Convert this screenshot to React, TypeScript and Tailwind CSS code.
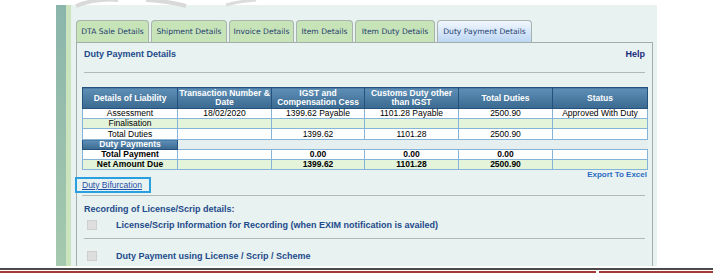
import React from "react";

const hdr = "bg-[linear-gradient(#5e8fb6,#3b6990)] text-white font-bold border border-[#24527e]";
const cell = "border border-[#86b3d8] text-center";

type Row = { c: string[]; bg: string; bold?: boolean; h: string };

const rows: Row[] = [
  { c: ["Assessment", "18/02/2020", "1399.62 Payable", "1101.28 Payable", "2500.90", "Approved With Duty"], bg: "bg-white", h: "h-[10px]" },
  { c: ["Finalisation", "", "", "", "", ""], bg: "bg-[#e3f4da]", h: "h-[10px]" },
  { c: ["Total Duties", "", "1399.62", "1101.28", "2500.90", ""], bg: "bg-white", h: "h-[11px]" },
];
const rows2: Row[] = [
  { c: ["Total Payment", "", "0.00", "0.00", "0.00", ""], bg: "bg-white", bold: true, h: "h-[10px]" },
  { c: ["Net Amount Due", "", "1399.62", "1101.28", "2500.90", ""], bg: "bg-[#e3f4da]", bold: true, h: "h-[10px]" },
];

const tabs = [
  { t: "DTA Sale Details", w: 73 },
  { t: "Shipment Details", w: 76 },
  { t: "Invoice Details", w: 65 },
  { t: "Item Details", w: 57 },
  { t: "Item Duty Details", w: 80 },
];

function Checkbox() {
  return <div className="w-[10px] h-[10px] bg-[#dedede] border border-[#cfcfcf] shrink-0" />;
}

export default function App() {
  return (
    <div className="relative w-[713px] h-[273px] bg-white overflow-hidden" style={{ fontFamily: '"Liberation Sans", Arial, sans-serif' }}>
      <svg className="absolute left-0 top-0" width="713" height="20" viewBox="0 0 713 20">
        <path d="M76 6 Q96 -2 118 0" stroke="#d9d9d9" strokeWidth="4" fill="none" />
        <path d="M146 0 Q168 1 186 6" stroke="#d9d9d9" strokeWidth="4" fill="none" />
        <path d="M226 5 Q240 1 256 0" stroke="#dcdcdc" strokeWidth="3" fill="none" />
      </svg>
      <div className="flex pl-[56px] pt-[5px]">
        <div className="w-[10px] h-[261px] bg-[linear-gradient(#8bb5ab,#a5c9ae)]" />
        <div className="w-[5px] h-[261px] bg-[#cbe4bd]" />
        <div className="w-[586px] h-[261px] bg-[#e8f2f0] pl-[5px] pt-[15px]">
          {/* tabs */}
          <div className="flex h-[22px] items-end" style={{ fontFamily: '"DejaVu Sans", Verdana, sans-serif' }}>
            {tabs.map((t, i) => (
              <div
                key={i}
                className="h-[22px] mr-[2px] rounded-t-[4px] border border-b-0 border-[#a9b3ad] bg-[#c7e3b8] text-[#1f3d6e] text-[7.6px] flex items-center justify-center"
                style={{ width: t.w }}
              >
                {t.t}
              </div>
            ))}
            <div className="h-[22px] w-[95px] rounded-t-[4px] border border-b-0 border-[#a9b3ad] bg-[linear-gradient(#f2f7ff,#bcd6f3)] text-[#1f3d6e] text-[7.6px] flex items-center justify-center">
              Duty Payment Details
            </div>
          </div>
          {/* content box */}
          <div className="w-[577px] h-[224px] border border-[#a3aeaa] border-b-0">
            <div className="px-[7px] pt-[5px] flex justify-between items-center h-[17px]">
              <span className="text-[9px] font-bold text-[#1e4a8c] leading-[12px]">Duty Payment Details</span>
              <span className="text-[9px] font-bold text-[#1a2a80] leading-[12px]">Help</span>
            </div>
            <div className="mx-[7px] mt-[12px] h-px bg-[#b3b8b8]" />
            <div className="px-[5px] mt-[14px]">
              <table className="border-collapse w-[565px] text-[8.5px] leading-[9px] text-black table-fixed">
                <colgroup>
                  <col style={{ width: 95 }} />
                  <col style={{ width: 94 }} />
                  <col style={{ width: 93 }} />
                  <col style={{ width: 94 }} />
                  <col style={{ width: 94 }} />
                  <col style={{ width: 95 }} />
                </colgroup>
                <thead>
                  <tr className="h-[21px]">
                    <th className={hdr}>Details of Liability</th>
                    <th className={hdr}>Transaction Number &amp; Date</th>
                    <th className={hdr}>IGST and Compensation Cess</th>
                    <th className={hdr}>Customs Duty other than IGST</th>
                    <th className={hdr}>Total Duties</th>
                    <th className={hdr}>Status</th>
                  </tr>
                </thead>
                <tbody>
                  {rows.map((r, i) => (
                    <tr key={i} className={r.h + " " + r.bg}>
                      {r.c.map((c, j) => (
                        <td key={j} className={cell + " p-0 " + r.h}>{c}</td>
                      ))}
                    </tr>
                  ))}
                  <tr className="h-[10px]">
                    <td className={hdr + " text-center p-0"}>Duty Payments</td>
                    <td colSpan={5} className="p-0 bg-[#e5efef]" />
                  </tr>
                  {rows2.map((r, i) => (
                    <tr key={i} className={r.h + " font-bold " + r.bg}>
                      {r.c.map((c, j) => (
                        <td key={j} className={cell + " p-0 " + r.h}>{c}</td>
                      ))}
                    </tr>
                  ))}
                </tbody>
              </table>
            </div>
            <div className="h-[7px] pr-[5px] flex justify-end">
              <span className="text-[8px] font-bold text-[#2c6cc2] leading-[10px]">Export To Excel</span>
            </div>
            <div className="ml-[-2px] w-[76px] h-[16px] border-2 border-[#2a9fe0] flex items-center pl-[5px]">
              <span className="text-[8.5px] text-[#1f4fa8] underline leading-[10px]">Duty Bifurcation</span>
            </div>
            <div className="ml-[5px] mr-[7px] mt-[2px] h-px bg-[#b3b8b8]" />
            <div className="px-[7px] mt-[7px] text-[9px] font-bold text-[#1e4a8c] leading-[12px]">Recording of License/Scrip details:</div>
            <div className="mt-[4px] pl-[10px] flex items-center h-[12px]">
              <Checkbox />
              <span className="ml-[19px] text-[9px] font-bold text-[#1e4a8c] leading-[12px]">License/Scrip Information for Recording (when EXIM notification is availed)</span>
            </div>
            <div className="mx-[7px] mt-[7px] h-px bg-[#b3b8b8]" />
            <div className="mt-[11px] pl-[10px] flex items-center h-[12px]">
              <Checkbox />
              <span className="ml-[19px] text-[9px] font-bold text-[#1e4a8c] leading-[12px]">Duty Payment using License / Scrip / Scheme</span>
            </div>
          </div>
        </div>
      </div>
      <div className="absolute left-0 top-[268px] w-[713px] h-[2px] bg-[#4a4a4a]" />
      <div className="absolute left-0 top-[271px] w-[596px] h-[2px] bg-[#a33a36]" />
      <div className="absolute left-[599px] top-[271px] w-[114px] h-[2px] bg-[#a33a36]" />
    </div>
  );
}
